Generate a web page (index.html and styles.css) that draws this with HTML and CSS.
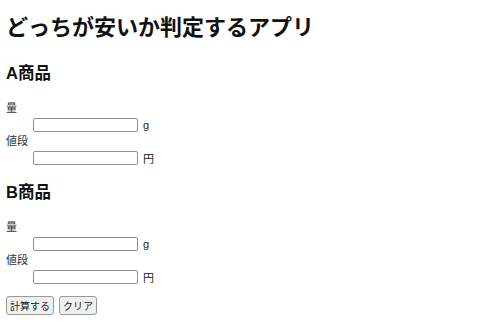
FILE: index.html
```html
<!DOCTYPE html>
<html lang="ja">
<head>
<meta charset="utf-8">
<title>どっちが安いか判定するアプリ</title>
<link rel="stylesheet" href="styles.css">
</head>
<body>
<h1 class="title">どっちが安いか判定するアプリ</h1>
<section class="item">
  <h2 class="item-title">A商品</h2>
  <dl class="fields">
    <dt class="label">量</dt>
    <dd class="field"><input class="box" type="text"><span class="unit">g</span></dd>
    <dt class="label">値段</dt>
    <dd class="field"><input class="box" type="text"><span class="unit">円</span></dd>
  </dl>
</section>
<section class="item">
  <h2 class="item-title">B商品</h2>
  <dl class="fields">
    <dt class="label">量</dt>
    <dd class="field"><input class="box" type="text"><span class="unit">g</span></dd>
    <dt class="label">値段</dt>
    <dd class="field"><input class="box" type="text"><span class="unit">円</span></dd>
  </dl>
</section>
<div class="actions">
  <button class="btn" type="button">計算する</button>
  <button class="btn" type="button">クリア</button>
</div>
</body>
</html>
```
FILE: styles.css
```css
html, body {
  margin: 0;
  padding: 0;
  background: #fff;
}
body {
  padding: 0 6px;
  font-family: "Liberation Sans", "Noto Sans CJK JP", sans-serif;
  color: #000;
}
.title {
  margin: 13px 0 18px;
  font-size: 22px;
  line-height: 30px;
  font-weight: bold;
  color: #111;
}
.item-title {
  margin: 14px 0 0;
  font-size: 16.5px;
  line-height: 24px;
  font-weight: bold;
  color: #111;
}
.fields {
  margin: 15px 0 0;
  font-size: 11px;
}
.label {
  line-height: 16px;
  color: #333;
}
.field {
  margin: 0 0 0 27px;
  height: 17px;
  display: flex;
  align-items: center;
  gap: 5px;
}
.box {
  box-sizing: border-box;
  width: 105px;
  height: 14px;
  margin: 0;
  padding: 0 3px;
  border: 1px solid #8f8f8f;
  border-radius: 2px;
  background: #fff;
  font-size: 10px;
}
.unit {
  font-size: 11px;
  color: #222;
}
.actions {
  margin-top: 11px;
  display: flex;
  gap: 5px;
}
.btn {
  box-sizing: border-box;
  height: 19px;
  margin: 0;
  padding: 0 3px;
  font-family: "Liberation Sans", "Noto Sans CJK JP", sans-serif;
  font-size: 10px;
  color: #222;
  background: #efefef;
  border: 1px solid #9a9a9a;
  border-radius: 3px;
}
```
